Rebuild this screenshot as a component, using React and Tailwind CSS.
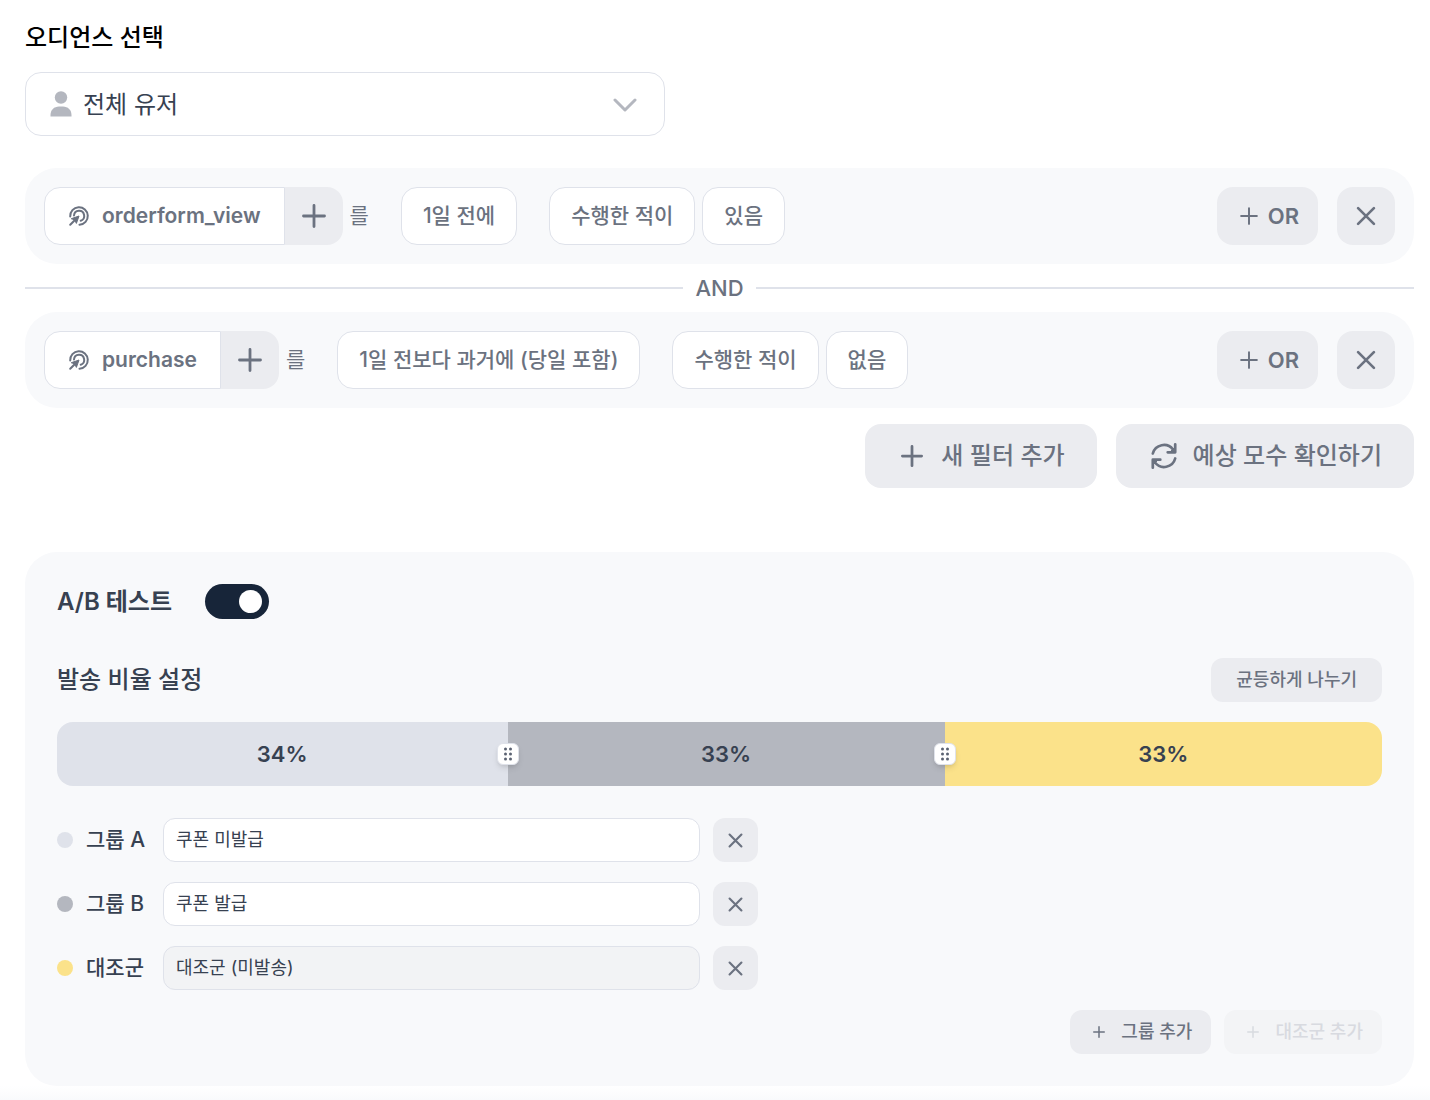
import { useState } from 'react'

const groupColors = {
  a: 'bg-[#dfe2ea]',
  b: 'bg-[#b4b7bf]',
  control: 'bg-[#fbe28a]',
}

const filters = [
  { event: 'orderform_view', period: '1일 전에', action: '수행한 적이', result: '있음' },
  { event: 'purchase', period: '1일 전보다 과거에 (당일 포함)', action: '수행한 적이', result: '없음' },
]

const initialGroups = [
  { id: 'a', label: '그룹 A', name: '쿠폰 미발급', ratio: 34 },
  { id: 'b', label: '그룹 B', name: '쿠폰 발급', ratio: 33 },
  { id: 'control', label: '대조군', name: '대조군 (미발송)', ratio: 33, locked: true },
]

function PlusIcon({ className, stroke = 2 }) {
  return (
    <svg className={className} viewBox="0 0 24 24" fill="none" stroke="currentColor" strokeWidth={stroke} strokeLinecap="round">
      <path d="M12 1.5v21M1.5 12h21" />
    </svg>
  )
}

function CloseIcon({ className, stroke = 3 }) {
  return (
    <svg className={className} viewBox="0 0 24 24" fill="none" stroke="currentColor" strokeWidth={stroke} strokeLinecap="round">
      <path d="M2.5 2.5l19 19M21.5 2.5l-19 19" />
    </svg>
  )
}

function UserIcon() {
  return (
    <svg className="h-[26px] w-[22px]" viewBox="0 0 22 26" fill="currentColor">
      <circle cx="11" cy="6.5" r="6.2" />
      <path d="M0.5 25.5v-1.5c0-5 3.600-8.500 8.500-8.500h4c4.900 0 8.500 3.500 8.500 8.500v1.500z" />
    </svg>
  )
}

function EventIcon() {
  return (
    <svg className="h-[22px] w-[22px]" viewBox="0 0 22 22" fill="none" stroke="currentColor" strokeWidth="2" strokeLinecap="round">
      <path d="M2.200 11.500A8.800 8.800 0 1 1 11.500 19.800" />
      <path d="M6 10.500A5.100 5.100 0 1 1 12.700 15.800" />
      <path d="M2.200 19.800l5-5" />
      <path d="M3.600 13.600l7.400-2.600-2.600 7.400-1.600-3.200z" fill="currentColor" strokeWidth="1" strokeLinejoin="round" />
    </svg>
  )
}

function RefreshIcon() {
  return (
    <svg className="h-7 w-7" viewBox="0 0 28 28" fill="none" stroke="currentColor" strokeWidth="2.700" strokeLinecap="round" strokeLinejoin="round">
      <path d="M2.800 11.500A11.500 11.500 0 0 1 23 7.500" />
      <path d="M25.200 2.300v8h-7.500" />
      <path d="M25.200 16.500A11.500 11.500 0 0 1 5 20.500" />
      <path d="M2.800 25.700v-8h7.500" />
      <path d="M20.500 9.500l4-4v4zM7.500 18.500l-4 4v-4z" fill="currentColor" strokeWidth="1" />
    </svg>
  )
}

function Chip({ children }) {
  return (
    <button className="h-[58px] rounded-2xl border border-[#dfe2ea] bg-white px-[21px] font-medium">
      {children}
    </button>
  )
}

function FilterRow({ filter }) {
  return (
    <div className="flex items-center justify-between rounded-[32px] bg-[#f8f9fb] p-[19px] text-[21px] text-[#6b7280]">
      <div className="flex items-center">
        <button className="flex h-[58px] items-center gap-3 rounded-l-2xl border border-r-[#dfe2ea] border-[#dfe2ea] bg-white pl-[23px] pr-[23px] font-semibold">
          <EventIcon />
          {filter.event}
        </button>
        <button aria-label="이벤트 추가" className="flex h-[58px] w-[58px] items-center justify-center rounded-r-2xl bg-[#ebecf0]">
          <PlusIcon className="h-6 w-6" stroke={2.8} />
        </button>
        <span className="ml-[7px] mr-8">를</span>
        <Chip>{filter.period}</Chip>
        <div className="ml-8 flex gap-[7px]">
          <Chip>{filter.action}</Chip>
          <Chip>{filter.result}</Chip>
        </div>
      </div>
      <div className="flex gap-[19px]">
        <button className="flex h-[58px] items-center gap-[10px] rounded-2xl bg-[#ebecf0] pl-[23px] pr-[19px] text-[22px] font-semibold">
          <PlusIcon className="h-[18px] w-[18px]" stroke={2.6} />
          OR
        </button>
        <button aria-label="필터 삭제" className="flex h-[58px] w-[58px] items-center justify-center rounded-2xl bg-[#ebecf0]">
          <CloseIcon className="h-5 w-5" stroke={3.2} />
        </button>
      </div>
    </div>
  )
}

function AudienceSelect() {
  return (
    <div className="relative mt-4 max-w-[640px]">
      <span className="pointer-events-none absolute inset-y-0 left-[25px] flex items-center text-[#b4b7bf]">
        <UserIcon />
      </span>
      <select
        id="audience"
        className="h-16 w-full appearance-none rounded-2xl border border-[#dfe2ea] bg-white pl-[57px] pr-16 pt-[2px] text-2xl text-[#374151]"
      >
        <option>전체 유저</option>
      </select>
      <span className="pointer-events-none absolute inset-y-0 right-7 flex items-center pt-[2px] text-[#b4b7bf]">
        <svg className="h-[14px] w-6" viewBox="0 0 24 14" fill="none" stroke="currentColor" strokeWidth="3" strokeLinecap="round" strokeLinejoin="round">
          <path d="M2 2l10 10L22 2" />
        </svg>
      </span>
    </div>
  )
}

function RatioBar({ groups }) {
  return (
    <div className="mt-5 flex h-16">
      {groups.map((group, i) => (
        <div
          key={group.id}
          className={`relative flex items-center justify-center text-[22px] font-semibold text-[#374151] first:rounded-l-2xl last:rounded-r-2xl ${groupColors[group.id]}`}
          style={{ width: `${group.ratio}%` }}
        >
          {group.ratio}%
          {/* drag handle sits on the border with the next group */}
          {i < groups.length - 1 && (
            <button
              aria-label="비율 조절"
              className="absolute -right-[11px] z-10 flex h-[22px] w-[22px] items-center justify-center rounded-md border border-[#dfe2ea] bg-white text-[#5b6272] shadow-md"
            >
              <svg className="h-[14px] w-[10px]" viewBox="0 0 10 14" fill="currentColor">
                <circle cx="2.500" cy="2" r="1.500" />
                <circle cx="7.500" cy="2" r="1.500" />
                <circle cx="2.500" cy="7" r="1.500" />
                <circle cx="7.500" cy="7" r="1.500" />
                <circle cx="2.500" cy="12" r="1.500" />
                <circle cx="7.500" cy="12" r="1.500" />
              </svg>
            </button>
          )}
        </div>
      ))}
    </div>
  )
}

export default function App() {
  const [enabled, setEnabled] = useState(true)
  const [groups, setGroups] = useState(initialGroups)

  const handleNameChange = (id, name) => {
    setGroups(groups.map((group) => (group.id === id ? { ...group, name } : group)))
  }

  return (
    <div className="bg-white font-['Inter','Noto_Sans_CJK_KR',sans-serif]">
      <main className="pl-[25px] pr-4 pt-5">
        <label htmlFor="audience" className="block text-2xl leading-9 font-medium text-black">
          오디언스 선택
        </label>
        <AudienceSelect />

        {/* Filters */}
        <div className="mt-8">
          <FilterRow filter={filters[0]} />
          <div className="flex h-12 items-center gap-3 text-[22px] font-medium text-[#6b7280]">
            <div className="h-[2px] flex-1 bg-[#dfe2ea]" />
            AND
            <div className="h-[2px] flex-1 bg-[#dfe2ea]" />
          </div>
          <FilterRow filter={filters[1]} />
        </div>
        <div className="mt-4 flex justify-end gap-[19px] text-2xl font-medium text-[#6b7280]">
          <button className="flex h-16 items-center gap-[18px] rounded-2xl bg-[#ebecf0] pl-9 pr-8">
            <PlusIcon className="h-[22px] w-[22px]" stroke={3} />
            새 필터 추가
          </button>
          <button className="flex h-16 items-center gap-[15px] rounded-2xl bg-[#ebecf0] pl-[34px] pr-8">
            <RefreshIcon />
            예상 모수 확인하기
          </button>
        </div>

        {/* A/B test */}
        <section className="mt-16 rounded-[32px] bg-[#f8f9fb] p-8 text-[#374151]">
          <div className="flex items-center gap-[33px]">
            <label htmlFor="ab-test" className="text-2xl font-semibold">A/B 테스트</label>
            <span className="relative flex h-[35px] w-16">
              <input
                id="ab-test"
                type="checkbox"
                role="switch"
                checked={enabled}
                onChange={() => setEnabled(!enabled)}
                className="peer h-full w-full appearance-none rounded-full bg-[#b4b7bf] checked:bg-[#172539]"
              />
              <span className="pointer-events-none absolute left-[7px] top-[6px] h-[23px] w-[23px] rounded-full bg-white peer-checked:left-[34px]" />
            </span>
          </div>

          <div className="mt-[39px] flex items-center justify-between">
            <h2 className="text-2xl font-medium">발송 비율 설정</h2>
            <button className="h-11 rounded-xl bg-[#ebecf0] px-[25px] text-lg font-medium text-[#6b7280]">
              균등하게 나누기
            </button>
          </div>
          <RatioBar groups={groups} />

          <div className="mt-8 flex flex-col gap-5">
            {groups.map((group) => (
              <div key={group.id} className="flex items-center gap-[13px]">
                <span className={`h-4 w-4 rounded-full ${groupColors[group.id]}`} />
                <label htmlFor={`group-${group.id}`} className="w-16 text-[21px] font-medium">
                  {group.label}
                </label>
                <input
                  id={`group-${group.id}`}
                  value={group.name}
                  disabled={group.locked}
                  onChange={(e) => handleNameChange(group.id, e.target.value)}
                  className="h-11 w-[537px] rounded-xl border border-[#dfe2ea] bg-white px-3 pb-1 text-lg disabled:bg-[#f2f3f5]"
                />
                <button aria-label="그룹 삭제" className="flex h-11 w-[45px] items-center justify-center rounded-xl bg-[#ebecf0] text-[#6b7280]">
                  <CloseIcon className="h-[15px] w-[15px]" stroke={3.4} />
                </button>
              </div>
            ))}
          </div>

          <div className="mt-5 flex justify-end gap-[13px] text-lg font-medium text-[#6b7280]">
            <button className="flex h-11 items-center gap-4 rounded-xl bg-[#ebecf0] pl-[23px] pr-[19px]">
              <PlusIcon className="h-3 w-3" stroke={3} />
              그룹 추가
            </button>
            <button disabled className="flex h-11 items-center gap-4 rounded-xl bg-[#f3f4f6] pl-[23px] pr-[19px] text-[#d8dae0]">
              <PlusIcon className="h-3 w-3" stroke={3} />
              대조군 추가
            </button>
          </div>
        </section>
      </main>
      <footer className="h-[14px] bg-gradient-to-b from-white to-[#f9fafc]" />
    </div>
  )
}
